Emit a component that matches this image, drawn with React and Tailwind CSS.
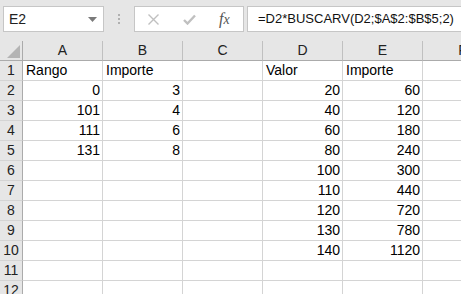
import React from 'react';

const cols = ['A', 'B', 'C', 'D', 'E', 'F'];

// valores por fila: [A, B, C, D, E]
const rows = [
  { A: 'Rango', B: 'Importe', D: 'Valor', E: 'Importe', text: true },
  { A: '0', B: '3', D: '20', E: '60' },
  { A: '101', B: '4', D: '40', E: '120' },
  { A: '111', B: '6', D: '60', E: '180' },
  { A: '131', B: '8', D: '80', E: '240' },
  { D: '100', E: '300' },
  { D: '110', E: '440' },
  { D: '120', E: '720' },
  { D: '130', E: '780' },
  { D: '140', E: '1120' },
  {},
  {},
];

function Toolbar() {
  return (
    <div className="h-[41px] bg-[#e6e6e6] flex items-start pt-[6px] pl-[3px]">
      {/* Cuadro de nombres */}
      <div className="shrink-0 w-[101px] h-[26px] bg-white border border-[#c6c6c6] flex items-center justify-between pl-[5px] pr-[6px]">
        <span className="text-[14px] text-[#222]">E2</span>
        <svg width="9" height="5" viewBox="0 0 9 5">
          <path d="M0 0 L9 0 L4.5 5 Z" fill="#7a7a7a" />
        </svg>
      </div>
      <div className="shrink-0 w-[30px] h-[26px] flex flex-col items-center justify-center gap-[2px]">
        <span className="w-[2px] h-[2px] bg-[#b0b0b0]" />
        <span className="w-[2px] h-[2px] bg-[#b0b0b0]" />
        <span className="w-[2px] h-[2px] bg-[#b0b0b0]" />
      </div>
      {/* Botones de fórmula */}
      <div className="shrink-0 w-[110px] h-[26px] bg-white border border-[#c6c6c6] flex items-center">
        <svg className="ml-[13px]" width="11" height="11" viewBox="0 0 11 11">
          <path d="M0.5 0.5 L10.5 10.5 M10.5 0.5 L0.5 10.5" stroke="#c0c0c0" strokeWidth="1.4" fill="none" />
        </svg>
        <svg className="ml-[24px]" width="13" height="11" viewBox="0 0 13 11">
          <path d="M1 6 L4.5 9.5 L12 1.5" stroke="#c0c0c0" strokeWidth="2.4" fill="none" />
        </svg>
        <span className="ml-[23px] text-[16px] italic text-[#555] font-['Liberation_Serif',serif] leading-none">
          f<span className="text-[14px]">x</span>
        </span>
      </div>
      {/* Barra de fórmulas */}
      <div className="ml-[3px] flex-1 min-w-0 h-[26px] bg-white border border-r-0 border-[#c6c6c6] flex items-center pl-[10px] overflow-hidden">
        <span className="text-[13px] text-[#111] whitespace-nowrap">=D2*BUSCARV(D2;$A$2:$B$5;2)</span>
      </div>
    </div>
  );
}

export default function App() {
  return (
    <div className="w-[461px] h-[294px] overflow-hidden bg-white font-['Liberation_Sans',Arial,sans-serif]">
      <Toolbar />
      <div className="grid grid-cols-[23px_repeat(6,80px)] auto-rows-[20px]">
        {/* Esquina */}
        <div className="bg-[#e6e6e6] border-r border-b border-[#ababab] flex items-end justify-end p-[2px]">
          <svg width="13" height="13" viewBox="0 0 13 13">
            <path d="M13 0 L13 13 L0 13 Z" fill="#b4b4b4" />
          </svg>
        </div>
        {cols.map((c) => (
          <div
            key={c}
            className="bg-[#e6e6e6] border-r border-[#c0c0c0] border-b border-b-[#ababab] flex items-end justify-center pb-[1px] text-[14px] text-[#222] leading-[17px]"
          >
            {c}
          </div>
        ))}
        {rows.map((r, i) => (
          <React.Fragment key={i}>
            <div className="bg-[#e6e6e6] border-r border-r-[#ababab] border-b border-b-[#d4d4d4] flex items-end justify-center pb-[1px] text-[14px] text-[#222] leading-[17px]">
              {i + 1}
            </div>
            {cols.map((c) => (
              <div
                key={c}
                className={
                  'border-r border-b border-[#d4d4d4] flex items-end pb-[1px] text-[14px] text-black leading-[17px] whitespace-nowrap ' +
                  (r.text ? 'justify-start pl-[3px]' : 'justify-end pr-[2px]')
                }
              >
                {r[c] || ''}
              </div>
            ))}
          </React.Fragment>
        ))}
      </div>
    </div>
  );
}
